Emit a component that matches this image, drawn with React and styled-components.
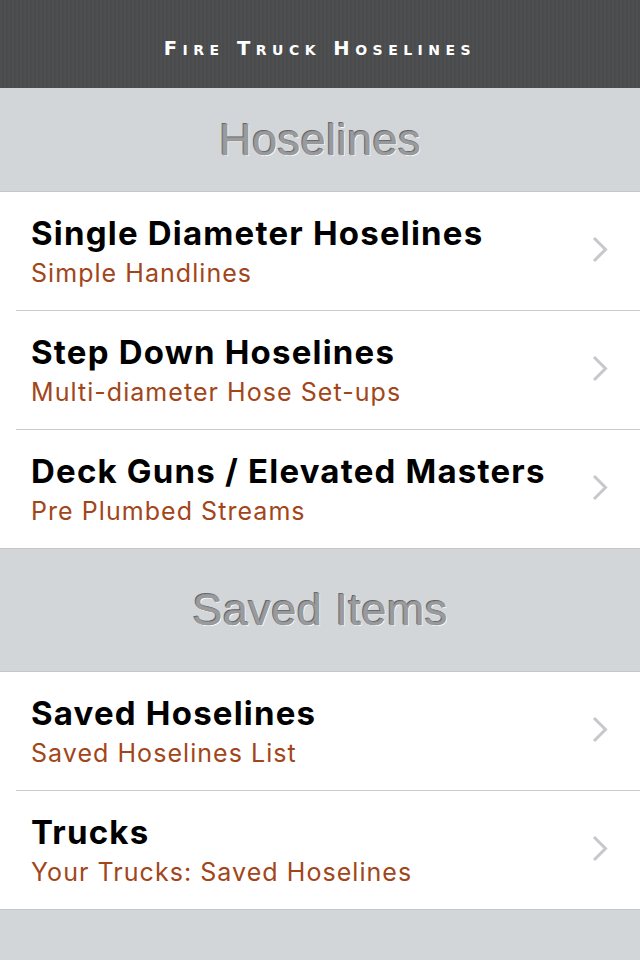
import React from "react";
import styled, { createGlobalStyle } from "styled-components";

const GlobalStyle = createGlobalStyle`
  html, body {
    margin: 0;
    padding: 0;
    background: #d3d6d9;
  }
  body {
    font-family: Inter, "Liberation Sans", Arial, sans-serif;
  }
`;

const Screen = styled.div`
  width: 640px;
  min-height: 960px;
  background: #d3d6d9;
  display: flex;
  flex-direction: column;
`;

const NavBar = styled.div`
  height: 88px;
  background: repeating-linear-gradient(
      90deg,
      rgba(255, 255, 255, 0.015) 0 2px,
      rgba(0, 0, 0, 0.015) 2px 4px
    ),
    #4b4c4e;
  display: flex;
  align-items: center;
  justify-content: center;
  padding-top: 8px;
  box-sizing: border-box;
`;

const NavTitle = styled.div`
  color: #ffffff;
  font-family: "DejaVu Sans", "Liberation Sans", sans-serif;
  font-weight: bold;
  font-size: 19.5px;
  font-variant: small-caps;
  letter-spacing: 5.5px;
`;

const SectionHeader = styled.div`
  height: ${(p) => p.$height}px;
  background: #d3d6d9;
  border-top: ${(p) => (p.$first ? "none" : "1px solid #c4c6c9")};
  border-bottom: 1px solid #c4c6c9;
  display: flex;
  align-items: center;
  justify-content: center;
`;

const SectionTitle = styled.div`
  font-family: "Liberation Sans", Arial, sans-serif;
  font-size: 45px;
  letter-spacing: 0.5px;
  color: #9a9b9d;
  -webkit-text-stroke: 0.6px #8a8b8d;
  text-shadow: -1px -1px 0 #5f6062, 1px 1px 0 #ffffff;
`;

const Group = styled.div`
  background: #ffffff;
`;

const Row = styled.div`
  position: relative;
  height: 118px;
  display: flex;
  align-items: flex-start;
  padding: 22px 0 0 31px;
  box-sizing: border-box;
  &::after {
    content: "";
    display: ${(p) => (p.$last ? "none" : "block")};
    position: absolute;
    left: 16px;
    right: 0;
    bottom: -1px;
    height: 1px;
    background: #cbcbcf;
  }
  & + & {
    margin-top: 1px;
  }
`;

const Texts = styled.div`
  flex: 1;
  display: flex;
  flex-direction: column;
  gap: 5px;
`;

const Title = styled.div`
  font-family: Inter, "Liberation Sans", Arial, sans-serif;
  font-weight: 700;
  font-size: 33px;
  line-height: 39px;
  letter-spacing: 1.2px;
  color: #000000;
`;

const Subtitle = styled.div`
  font-family: Inter, "Liberation Sans", sans-serif;
  font-size: 25px;
  line-height: 30px;
  letter-spacing: 1.05px;
  color: #a2461a;
`;

const Chevron = styled.svg`
  position: absolute;
  right: 32px;
  top: 44px;
  width: 16px;
  height: 27px;
`;

const ChevronIcon = () => (
  <Chevron viewBox="0 0 16 27">
    <path
      d="M2 2 L13.5 13.5 L2 25"
      fill="none"
      stroke="#c7c7cc"
      strokeWidth="3"
      strokeLinecap="butt"
      strokeLinejoin="miter"
    />
  </Chevron>
);

const Footer = styled.div`
  flex: 1;
  background: #d3d6d9;
  border-top: 1px solid #c4c6c9;
`;

const hoselines = [
  ["Single Diameter Hoselines", "Simple Handlines"],
  ["Step Down Hoselines", "Multi-diameter Hose Set-ups"],
  ["Deck Guns / Elevated Masters", "Pre Plumbed Streams"],
];

const saved = [
  ["Saved Hoselines", "Saved Hoselines List"],
  ["Trucks", "Your Trucks: Saved Hoselines"],
];

const RowList = ({ items }) => (
  <Group>
    {items.map(([title, sub], i) => (
      <Row key={title} $last={i === items.length - 1}>
        <Texts>
          <Title>{title}</Title>
          <Subtitle>{sub}</Subtitle>
        </Texts>
        <ChevronIcon />
      </Row>
    ))}
  </Group>
);

export default function App() {
  return (
    <>
      <GlobalStyle />
      <Screen>
        <NavBar>
          <NavTitle>Fire Truck Hoselines</NavTitle>
        </NavBar>
        <SectionHeader $first $height={103}>
          <SectionTitle>Hoselines</SectionTitle>
        </SectionHeader>
        <RowList items={hoselines} />
        <SectionHeader $height={122}>
          <SectionTitle>Saved Items</SectionTitle>
        </SectionHeader>
        <RowList items={saved} />
        <Footer />
      </Screen>
    </>
  );
}
